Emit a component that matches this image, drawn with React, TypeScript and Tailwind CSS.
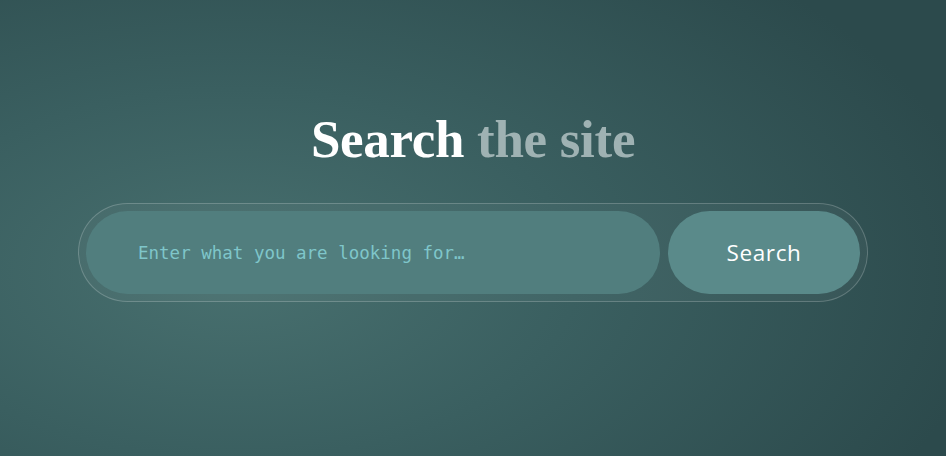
export default function App() {
	return (
		<div className="w-full h-[456px] flex flex-col items-center bg-[radial-gradient(ellipse_80%_90%_at_25%_60%,#48706f_0%,#3a5f60_45%,#2c4a4c_100%)] overflow-hidden">
			<h1 className="mt-[106px] text-[53px] leading-[66px] font-bold font-['Liberation_Serif',serif] text-white tracking-[-0.3px]">
				Search <span className="text-[#9fb2b3]">the site</span>
			</h1>
			<form
				className="mt-[31px] w-[790px] h-[99px] p-[7px] flex gap-2 rounded-full border border-white/20 bg-white/[0.04]"
				onSubmit={(e) => e.preventDefault()}
			>
				<input
					type="text"
					placeholder="Enter what you are looking for…"
					className="flex-1 h-full rounded-full bg-[#517e7e] pl-[52px] pr-6 text-[17.5px] text-[#bfe8ea] placeholder:text-[#7fc6ca] font-['DejaVu_Sans_Mono',monospace] outline-none"
				/>
				<button
					type="submit"
					className="w-[192px] h-full rounded-full bg-[#5a8a8a] text-white text-[22.5px] font-['Open_Sans',sans-serif] tracking-[0.6px]"
				>
					Search
				</button>
			</form>
		</div>
	);
}
